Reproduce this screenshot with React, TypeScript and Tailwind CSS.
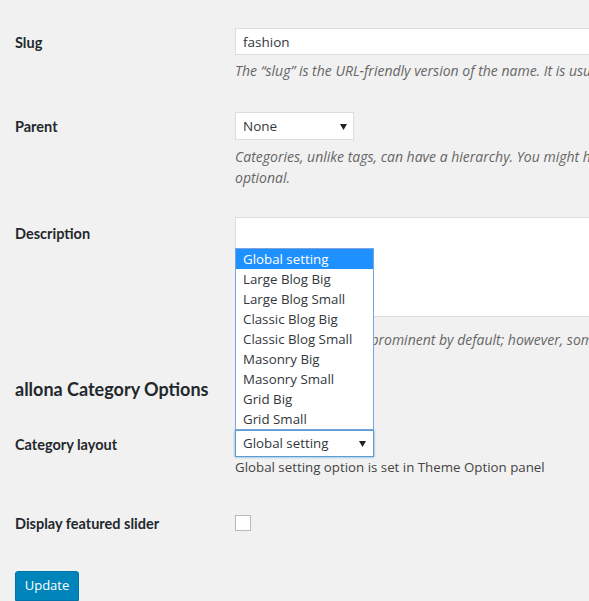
import React from 'react';

const LAYOUTS = [
  'Global setting',
  'Large Blog Big',
  'Large Blog Small',
  'Classic Blog Big',
  'Classic Blog Small',
  'Masonry Big',
  'Masonry Small',
  'Grid Big',
  'Grid Small',
];

function Caret() {
  return (
    <svg width="7" height="6" viewBox="0 0 7 6" className="shrink-0">
      <path d="M0 0h7L3.5 6z" fill="#222" />
    </svg>
  );
}

function Label({ children }: { children: React.ReactNode }) {
  return (
    <div className="w-[235px] shrink-0 pl-[15px] text-[14.5px] font-bold text-[#23282d] leading-5 font-['Lato',sans-serif]">
      {children}
    </div>
  );
}

export default function App() {
  return (
    <div
      className="min-h-screen w-full overflow-hidden bg-[#f1f1f1] text-[#444]"
      style={{ fontFamily: '"Open Sans", "Noto Sans", sans-serif' }}
    >
      {/* Slug */}
      <div className="flex pt-[28px]">
        <Label>
          <div className="h-[27px] pt-[3px] flex items-center">Slug</div>
        </Label>
        <div className="flex-1 min-w-0">
          <div className="h-[27px] w-[400px] border border-[#ddd] bg-white px-[7px] pt-[1px] flex items-center text-[13.5px] text-[#32373c]">
            fashion
          </div>
          <p className="mt-[6px] text-[14px] italic leading-5 text-[#666] whitespace-nowrap">
            The “slug” is the URL-friendly version of the name. It is usually all lowercase and contains only letters, numbers, and hyphens.
          </p>
        </div>
      </div>

      {/* Parent */}
      <div className="flex pt-[31px]">
        <Label>
          <div className="h-[28px] pt-[2px] flex items-center">Parent</div>
        </Label>
        <div className="flex-1 min-w-0">
          <div className="h-[28px] w-[119px] border border-[#ddd] bg-white pl-[7px] pr-[6px] pt-[1px] flex items-center justify-between text-[13.5px] text-[#32373c]">
            <span>None</span>
            <Caret />
          </div>
          <p className="mt-[6px] text-[14px] italic leading-[21px] text-[#666] whitespace-nowrap">
            Categories, unlike tags, can have a hierarchy. You might have a Jazz category, and under that have children categories for Bebop and Big Band. Totally
            <br />
            optional.
          </p>
        </div>
      </div>

      {/* Description */}
      <div className="flex pt-[29px]">
        <Label>
          <div className="pt-[7px]">Description</div>
        </Label>
        <div className="flex-1 min-w-0">
          <div className="h-[100px] w-[400px] border border-[#ddd] bg-white" />
          <p className="mt-[12px] text-[14px] italic leading-[21px] text-[#666] whitespace-nowrap">
            The description is not prominent by default; however, some themes may show it.
          </p>
        </div>
      </div>

      {/* Section heading */}
      <h2 className="pt-[27px] pl-[15px] text-[18px] font-bold leading-6 text-[#23282d] font-['Lato',sans-serif]">
        allona Category Options
      </h2>

      {/* Category layout */}
      <div className="flex pt-[29px]">
        <Label>
          <div className="h-[27px] pt-[3px] flex items-center">Category layout</div>
        </Label>
        <div className="flex-1 min-w-0">
          <div className="relative w-[139px]">
            <ul className="absolute bottom-full left-0 w-[139px] border border-[#7ea2db] bg-white text-[13.3px] text-[#32373c]">
              {LAYOUTS.map((item, i) => (
                <li
                  key={item}
                  className={
                    i === 0
                      ? 'h-[20px] leading-[20px] px-[7px] bg-[#1e90ff] text-white'
                      : 'h-[20px] leading-[20px] px-[7px]'
                  }
                >
                  {item}
                </li>
              ))}
            </ul>
            <div className="h-[27px] w-[139px] border border-[#5b9dd9] shadow-[0_0_2px_rgba(30,140,190,0.8)] bg-white pl-[7px] pr-[7px] pt-[1px] flex items-center justify-between text-[13.3px] text-[#32373c]">
              <span>Global setting</span>
              <Caret />
            </div>
          </div>
          <p className="text-[13.3px] leading-5 text-[#444] whitespace-nowrap">
            Global setting option is set in Theme Option panel
          </p>
        </div>
      </div>

      {/* Display featured slider */}
      <div className="flex pt-[38px]">
        <Label>
          <div className="h-[16px] pt-[1px] flex items-center">Display featured slider</div>
        </Label>
        <div className="flex-1 min-w-0">
          <div className="h-[16px] w-[16px] border border-[#b4b9be] bg-white" />
        </div>
      </div>

      {/* Update */}
      <div className="pt-[40px] pl-[15px]">
        <button className="h-[30px] w-[64px] rounded-[3px] border border-[#0073aa] bg-[#0085ba] shadow-[0_1px_0_#006799] text-[13px] text-white">
          Update
        </button>
      </div>
    </div>
  );
}
